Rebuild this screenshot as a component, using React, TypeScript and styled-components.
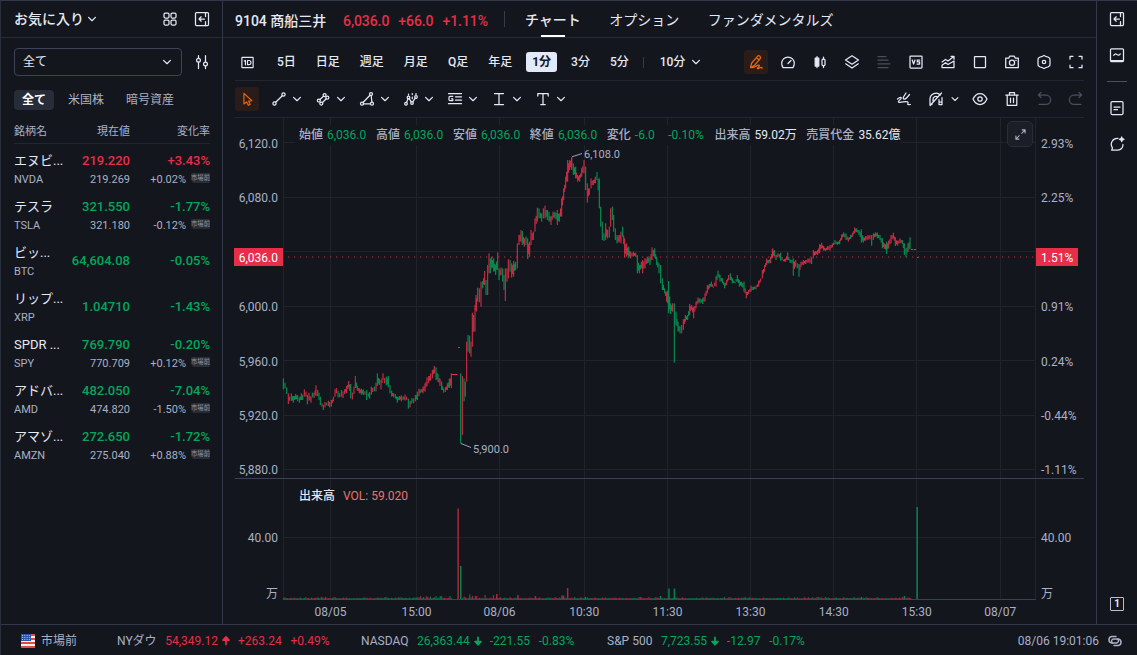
import React from "react";
import styled, { createGlobalStyle, css } from "styled-components";

const C = {
  bg: "#14161d",
  line: "#32384a",
  soft: "#212631",
  text: "#e4e9f6",
  mid: "#a9b1c6",
  dim: "#4a4e59",
  red: "#e62e48",
  green: "#05a55b",
  orange: "#e9650f",
};

const Global = createGlobalStyle`
  * { box-sizing: border-box; }
  body { margin: 0; background: ${C.bg}; overflow: hidden; }
  body, text { font-family: Roboto, "Noto Sans CJK JP", sans-serif; }
`;

const Page = styled.div`
  width: 1137px; height: 655px; display: flex; flex-direction: column;
  background: ${C.bg}; color: ${C.text}; font-size: 12px; line-height: 16px;
  border-top: 1px solid ${C.line}; border-left: 1px solid #292e3c; white-space: nowrap;
`;
const Body = styled.div`display: flex; height: 623px;`;

/* ---------- icons ---------- */
const Svg = styled.svg<{ $s: number }>`
  width: ${(p) => p.$s}px; height: ${(p) => p.$s}px; flex: none; display: block; overflow: visible;
  fill: none; stroke: currentColor; stroke-width: 1.25; stroke-linecap: round; stroke-linejoin: round;
`;
const shapes: Record<string, React.ReactNode> = {
  grid: <><rect x="2" y="2" width="5" height="5" rx="1.2" /><rect x="9" y="2" width="5" height="5" rx="1.2" /><rect x="2" y="9" width="5" height="5" rx="1.2" /><rect x="9" y="9" width="5" height="5" rx="1.2" /></>,
  collapse: <><rect x="1.5" y="1.5" width="13" height="13" rx="1" /><path d="M11.500 1.500v4M11.500 10.500v4M10.500 8H5M7.200 5.800 5 8 7.200 10.200" /></>,
  sliders: <><path d="M4.500 1.500V4.500M4.500 8V14.500M11.500 1.500v6.500M11.500 12v2.500" /><circle cx="4.500" cy="6.200" r="1.900" /><circle cx="11.500" cy="10" r="1.900" /></>,
  oneD: <><rect x="2" y="2.500" width="12" height="11" rx=".5" /><path d="M4.500 6.500 5.800 5.800V10.500M8 5.900h1.500q2.200 0 2.200 2.200t-2.200 2.200H8z" /></>,
  pencil: <path d="M2.500 13.500 3.700 9 9.500 2.300q1.200-1.100 2.400-.1t.4 2.300L6.700 11.200 2.500 13.500q2.500.6 5-1t3.500-1.300-.9 2.300 1.200.6 2.700.2M8.500 3.800l2.700 2.200" />,
  gauge: <path d="M3 13.500Q1.700 12 1.700 9.300a6.300 6.300 0 0 1 12.600 0q0 2.700-1.300 4.200zM8 9.500l3-3" />,
  candles: <><path d="M5 2.500v11M11.500 3v2M11.500 11.500v2" /><rect x="3.200" y="4" width="3.600" height="8" fill="currentColor" /><rect x="10" y="5" width="3" height="6.500" rx="1" /></>,
  layers: <path d="M8 1.800 14.500 6 8 10.200 1.500 6zM1.700 9.800 8 14l6.300-4.200" />,
  lines: <path d="M2 2.500h8M2 6.200h10M2 9.800h12M2 13.500h10" />,
  vs: <><rect x="2" y="2" width="12" height="12" rx=".8" /><path d="M4.200 6l1.400 4L7 6M11.700 6H9.300v1.900h2.300V10H9" /></>,
  area: <path d="M2 8 5.500 5.500 8 7l5.500-4.200M11 2.300h3v3M2 11.200 5.500 8.700 8 10.500 14 7v6.500H2z" />,
  square: <rect x="2.500" y="2.500" width="11" height="11" rx=".4" />,
  camera: <><path d="M1.700 4.200h3l1-2h4.600l1 2h3v9.500H1.700z" /><circle cx="8" cy="8.800" r="2.600" /><path d="M11.800 6.300h.4" /></>,
  hex: <><path d="M6.400 2.300 8 1.500l1.600.8L11.800 3l2 1.300.2 2.200v3l-.2 2.200-2 1.300-2.200.7-1.600.8-1.600-.8-2.200-.7-2-1.300L2 9.500v-3l.2-2.200 2-1.300z" /><circle cx="8" cy="8" r="1.700" /></>,
  full: <path d="M2 5V2.300h3M11 2.300h3V5M14 11v2.700h-3M5 13.700H2V11" />,
  cursor: <path d="M4.200 1.500v11.300l2.900-2.300 1.700 3.700 2-1-1.700-3.500 3.600-.4z" />,
  line: <><circle cx="3.500" cy="12.500" r="1.600" /><circle cx="12.500" cy="3.500" r="1.600" /><path d="M4.700 11.300l6.600-6.600" /></>,
  channel: <><circle cx="3.800" cy="9.600" r="1.500" /><circle cx="9.600" cy="4" r="1.500" /><circle cx="6.300" cy="12.600" r="1.500" /><circle cx="12.300" cy="6.700" r="1.500" /><path d="M5 8.500l3.500-3.300M7.500 11.500l3.700-3.700" /></>,
  triangle: <><circle cx="12" cy="3" r="1.500" /><circle cx="3" cy="12.700" r="1.500" /><circle cx="13" cy="12.700" r="1.500" /><path d="M4 11.500l7-7.300M12.200 4.500l.7 6.700M4.500 12.800h7" /></>,
  pattern: <><circle cx="3" cy="12.700" r="1.300" /><circle cx="5.500" cy="6.500" r="1.300" /><circle cx="9" cy="12" r="1.300" /><circle cx="13" cy="6" r="1.300" /><path d="M3.500 11.500 5 7.700M6.200 7.600 8.300 10.800M9.700 10.900l2.600-3.800M5.500 3v1M9.300 2.500v1M9.300 6v1.500M13 2.500v1" /></>,
  fib: <path d="M1.500 2.500h13M8.500 5.800h6M8.500 9.200h6M1.500 12.700h13M5.800 5.300H3q-1 0-1 1.200v2q0 1.200 1 1.200h2.800V7.800H4.500" />,
  ibeam: <path d="M3.500 2.500h9M3.500 13.500h9M8 2.500v11" />,
  text: <path d="M2.800 5V2.500h10.400V5M8 2.500v11M5.800 13.500h4.400" />,
  brush: <path d="M10 2 7.500 6q-.8 2 .7 2.200 1.300 0 2.800-1.700L13.500 3.500M1.500 8c3-2.500 5-1.800 2.800.4S1.500 11.300 4 11.300s7.500-1.600 8 0-2 2.400 2.300 2.200" />,
  magnet: <path d="M2 13.500V8a6 6 0 0 1 10.300-4M5 10V8.500a3 3 0 0 1 4.500-2.700M2 13.500h2M11 8.500v5h3V6.500M11 11h3M2 14.500 13.500 2" />,
  eye: <><path d="M1 8q2.500-5.500 7-5.500T15 8q-2.500 5.500-7 5.500T1 8z" /><circle cx="8" cy="8" r="2.200" /></>,
  trash: <path d="M1.800 4h12.400M5.500 4V1.700h5V4M3.200 4v10.300h9.600V4M6.500 7v4.500M9.500 7v4.500" />,
  undo: <path d="M2.500 4H10a4.500 4.500 0 0 1 0 9.300H3M5 1.500 2.300 4 5 6.500" />,
  redo: <path d="M13.500 4H6a4.500 4.500 0 0 0 0 9.300h7M11 1.500 13.700 4 11 6.500" />,
  wave: <><rect x="1.500" y="1.800" width="13" height="12.700" rx="1" /><path d="M2 13.700h12" /><path d="M4.700 8.300q1.600-2.200 3.300-.7t3.300-.7" /></>,
  note: <><rect x="2" y="1.500" width="12" height="13" rx="1.200" /><path d="M5 7h6M5 9.700h3.500" /></>,
  chat: <><path d="M9 2.300a6 6 0 0 0-5.500 9.500L2.700 14.200h6A6 6 0 0 0 14 8.500" /><path d="M12.700 1l.6 1.700 1.700.6-1.700.6-.6 1.700-.6-1.700-1.700-.6 1.700-.6z" fill="currentColor" /></>,
  expand: <path d="M9.500 6.500 13.500 2.500M10 2.300h3.700V6M6.500 9.500 2.500 13.500M2.300 10v3.700H6" />,
  chev: <path d="M4.600 6.400 8 9.700l3.400-3.300" />,
  link: <g strokeWidth="1.500"><path d="M9 3.500H4.700A3.300 3.300 0 0 0 4.700 10H9.500a2.200 2.200 0 0 0 1-4" /><path d="M7 12.500h4.300A3.300 3.300 0 0 0 11.300 6H6.500a2.200 2.200 0 0 0-1 4" /></g>,
  up: <path d="M8 3v9.500M8 2.500 4 6.800h8z" fill="currentColor" strokeWidth="2.300" />,
  down: <path d="M8 3v9.500M8 13 4 8.700h8z" fill="currentColor" strokeWidth="2.300" />,
};
const Icon = ({ n, s = 16 }: { n: string; s?: number }) => (
  <Svg viewBox="0 0 16 16" $s={s}>{shapes[n]}</Svg>
);

/* ---------- watch list ---------- */
const Side = styled.aside`width: 222px; border-right: 1px solid ${C.line}; flex: none;`;
const SideHead = styled.div`
  height: 37px; display: flex; align-items: center; padding: 0 12px 0 13px; border-bottom: 1px solid #262b38;
  font-size: 14px; font-weight: 500;
`;
const Fill = styled.div`flex: 1;`;
const Gap = styled.div<{ $w: number }>`width: ${(p) => p.$w}px; flex: none;`;
const Filter = styled.div`display: flex; align-items: center; padding: 10px 12px 0 13px; gap: 12px;`;
const Select = styled.div`
  width: 168px; height: 28px; border: 1px solid #3b4259; border-radius: 4px; padding: 0 6px 0 8px;
  display: flex; align-items: center; justify-content: space-between;
`;
const Chips = styled.div`display: flex; margin: 14px 0 0 13px; gap: 6px; color: ${C.mid};`;
const Chip = styled.div<{ $on?: boolean }>`
  height: 20px; line-height: 21px; padding: 0 8px; border-radius: 4px;
  ${(p) => p.$on && css`background: #272c38; color: #fff; font-weight: 700;`}
`;
const Cols = styled.div`
  display: grid; grid-template-columns: 47px 69px 80px; margin: 11px 12px 0 13px; height: 23px; line-height: 22px;
  border-bottom: 1px solid ${C.soft}; font-size: 11px; color: ${C.mid};
`;
const Right = styled.span`text-align: right;`;
const Row = styled.div`
  display: grid; grid-template-columns: 49px 67px 80px; height: 46px; margin: 0 12px 0 13px; padding-top: 6px; align-items: center;
`;
const Stack = styled.div<{ $end?: boolean; $single?: boolean }>`
  display: flex; flex-direction: column; height: 40px; padding-bottom: ${(p) => (p.$single ? 3 : 1)}px; justify-content: center;
  align-items: ${(p) => (p.$end ? "flex-end" : "flex-start")};
`;
const Name = styled.div`font-size: 13px; line-height: 20px;`;
const Sub = styled.div`
  font-size: 11px; line-height: 18px; height: 18px; color: ${C.mid}; display: flex; gap: 5px;
`;
const Value = styled.div<{ $up?: boolean }>`
  font-size: 13px; line-height: 20px; font-weight: 500; color: ${(p) => (p.$up ? C.red : C.green)};
`;
const Tag = styled.span`
  width: 19px; height: 10px; line-height: 10px; margin-top: 2px; font-size: 6.3px; text-align: center;
  background: #292c36; color: #9297a4; border-radius: 1px 1px 1px 4px;
`;
const stocks: [string, string, string, string, string?, string?][] = [
  ["エヌビ...", "NVDA", "219.220", "+3.43%", "219.269", "+0.02%"],
  ["テスラ", "TSLA", "321.550", "-1.77%", "321.180", "-0.12%"],
  ["ビッ...", "BTC", "64,604.08", "-0.05%"],
  ["リップ...", "XRP", "1.04710", "-1.43%"],
  ["SPDR ...", "SPY", "769.790", "-0.20%", "770.709", "+0.12%"],
  ["アドバ...", "AMD", "482.050", "-7.04%", "474.820", "-1.50%"],
  ["アマゾ...", "AMZN", "272.650", "-1.72%", "275.040", "+0.88%"],
];

const WatchList = () => (
  <Side>
    <SideHead>お気に入り<Icon n="chev" /><Fill /><Icon n="grid" /><Gap $w={16} /><Icon n="collapse" /></SideHead>
    <Filter><Select>全て<Icon n="chev" /></Select><Icon n="sliders" /></Filter>
    <Chips><Chip $on>全て</Chip><Chip>米国株</Chip><Chip>暗号資産</Chip></Chips>
    <Cols><span>銘柄名</span><Right>現在値</Right><Right>変化率</Right></Cols>
    {stocks.map(([name, code, price, chg, p2, c2]) => (
      <Row key={code}>
        <Stack><Name>{name}</Name><Sub>{code}</Sub></Stack>
        <Stack $end $single={!p2}><Value $up={chg[0] === "+"}>{price}</Value>{p2 && <Sub>{p2}</Sub>}</Stack>
        <Stack $end $single={!p2}><Value $up={chg[0] === "+"}>{chg}</Value>{c2 && <Sub>{c2}<Tag>市場前</Tag></Sub>}</Stack>
      </Row>
    ))}
  </Side>
);

/* ---------- main column ---------- */
const Main = styled.main`width: 873px; flex: none;`;
const Head = styled.div`
  height: 37px; display: flex; align-items: center; padding-left: 12px; border-bottom: 1px solid #262b38; font-size: 14px;
`;
const Title = styled.div`font-weight: 500; padding-top: 3px; width: 91px;`;
const Quote = styled.div`display: flex; gap: 9px; color: ${C.red}; margin-left: 17px; padding-top: 3px; font-weight: 500; letter-spacing: -.07px;`;
const Rule = styled.div<{ $h: number; $l: number; $r: number }>`
  width: 1px; height: ${(p) => p.$h}px; background: #343a48; margin: 0 ${(p) => p.$r}px 0 ${(p) => p.$l}px;
`;
const Tab = styled.div<{ $on?: boolean }>`
  height: 36px; line-height: 38px; margin-right: 28.5px; display: flex; flex-direction: column; align-items: center;
  ${(p) => p.$on && css`font-weight: 500; &::after { content: ""; width: 24px; height: 2px; flex: none; margin-top: -4px; background: #fff; }`}
`;
const Bar = styled.div<{ $h: number; $top?: number }>`
  height: ${(p) => p.$h}px; margin: 0 12px; padding-top: ${(p) => p.$top || 0}px;
  display: flex; align-items: center; border-bottom: 1px solid ${C.soft};
`;
const Period = styled.div<{ $on?: boolean; $last?: boolean }>`
  height: 20px; line-height: 21px; padding: 0 6px; margin-right: ${(p) => (p.$last ? -3 : 8)}px; border-radius: 3px; font-weight: 500;
  ${(p) => p.$on && css`background: #e2e9fb; color: #14161d; font-weight: 700;`}
`;
const Tool = styled.div<{ $on?: boolean; $dim?: boolean }>`
  width: 24px; height: 24px; display: flex; align-items: center; justify-content: center; border-radius: 3px; flex: none;
  color: ${(p) => (p.$on ? C.orange : p.$dim ? C.dim : C.text)}; background: ${(p) => (p.$on ? "#2a1d19" : "none")};
`;
const Tools = styled.div`display: flex; gap: 8px; margin: 0 -4px 0 auto;`;
const Draw = styled.div`display: flex; align-items: center; width: 37px; margin-left: 7px; gap: 2px;`;
const Snap = styled.div`display: flex; align-items: center; width: 36px;`;

/* ---------- chart ---------- */
const ChartBox = styled.div`position: relative; height: 506px;`;
const Plot = styled.svg`display: block; width: 873px; height: 506px;`;
const Info = styled.div`
  position: absolute; left: 72px; top: 7px; width: 605px; height: 20px; padding-left: 4px;
  display: flex; gap: 9.7px; line-height: 20px; background: ${C.bg};
`;
const Pair = styled.span<{ $c?: string }>`
  color: ${C.mid}; font-weight: 500; b { font-weight: 400; margin-left: 4px; color: ${(p) => p.$c || C.green}; }
  b + b { margin-left: 13.5px; margin-right: 1px; }
`;
const Zoomer = styled.div`
  position: absolute; left: 784px; top: 3px; width: 26px; height: 26px; border-radius: 5px; border: 1px solid #282d39;
  background: #1b1e27; display: flex; align-items: center; justify-content: center; color: ${C.mid};
`;

type Session = { x: number; y: number; c: string };
/* Each entry is "x top bottom" in third-pixel units; the trailing letter is the candle's colour. */
const sessions: Session[] = [
  { x: 225, y: 300, c: "175 235 268g,180 248 265g,185 262 282g,190 280 312r,194 290 302g,199 280 303r,205 288 308g,212 282 298r,218 285 304g,223 292 308g,229 280 300r,233 284 300g,238 268 290r,243 275 290r,247 285 313g,252 278 302r,258 290 308r,262 278 292g,267 278 294r,273 256 288r,278 270 288g,282 278 300g,286 290 315g,291 310 320r,295 315 330g,300 306 322r,305 308 316g,310 302 318r,314 306 322g,319 300 320r,325 290 304r,330 268 290r,334 264 280r,339 272 292g,344 280 292r,349 270 290g,354 274 294r,359 268 282r,365 258 280r,371 243 262r,377 252 295g,382 278 298r,387 260 282r,391 228 264r,397 258 272g,403 265 280r,409 266 284g,415 268 285g,420 274 284r,425 270 300g,430 280 290g,434 276 296g,439 260 284r,443 264 276r,448 260 274g,453 248 274r,457 220 258g,463 236 255g,468 240 268r,474 220 240r,479 234 250r,484 230 256g,490 228 262g,495 255 280g,500 272 290g,506 280 292r,511 282 295g,517 290 308g,523 288 300g,529 286 304r,534 290 300g,540 284 302r,545 290 300r,550 296 326g,555 304 322r,561 294 308g,566 296 310r,571 285 304r,577 275 300g,582 266 288r,588 268 278g,594 260 280r,600 250 275r,606 232 258r,611 228 250r,617 220 242r,622 210 235r,628 198 220r,633 202 240g,639 222 246g,645 236 258r,650 244 270g,656 266 278g,661 262 276r,667 250 270r,673 236 264g,679 220 264r" },
  { x: 225, y: 300, c: "707 220 431g,712 228 405r,717 235 304g,721 245 290r,725 125 245r,729 105 155g,734 107 160g,738 125 170r,742 38 140r,746 45 95g,750 15 95r,754 -5 35r" },
  { x: 225, y: 115, c: "753 540 585r,758 518 560r,763 520 562g,768 500 575r,773 498 520g,779 468 510r,783 495 540g,788 450 540r,792 415 475r,796 430 475g,800 425 460r,806 430 470g,812 450 480g,818 412 465r,822 460 495g,828 458 480r,833 460 500g,837 480 525g,841 460 558r,846 460 500r,850 433 490r,855 435 470g,860 445 488r,866 438 485r,872 440 465g,877 385 460r,882 360 390r,888 345 380r,892 348 390g,898 370 395r,903 365 390g,908 370 432g,914 380 425r,918 345 390r,925 350 375r,930 310 350r,937 278 320r,942 280 310g,950 295 320g,955 280 310r,960 272 310r,967 285 315g,972 290 320g,978 305 330r,984 290 310r,990 290 310g,997 285 330r,1003 295 320g,1010 250 305r,1016 220 255r,1022 185 220r,1028 135 200r,1034 135 165r,1040 128 160r" },
  { x: 540, y: 140, c: "95 52 90r,100 70 105g,107 80 115g,113 105 125r,119 105 125g,125 85 110r,132 60 100r,137 80 150g,142 130 188r,148 145 165r,153 115 145r,160 120 135r,166 110 130r,171 96 120g,178 115 205g,182 200 260g,187 245 300g,192 280 303g,197 250 300r,203 270 295g,208 260 292r,212 205 260r,217 200 240g,221 225 275g,226 265 300g,231 285 310g,237 285 308r,243 275 310r,248 260 290g,254 295 352r,260 310 350r,266 320 355g,272 335 355r,280 335 350r,287 338 350g,292 345 400g,298 375 400g,304 365 385g,308 360 400r,315 355 385r,322 350 370r,330 350 375g,336 322 360r,344 325 350g,350 350 375g,357 370 400g,362 375 430g,367 415 450g,374 445 460g,380 455 485r,386 423 520g,392 490 522g,398 490 515r,403 490 668g,408 515 555g,414 545 575g,420 560 580g,425 555 580r,430 538 570r,436 525 545r,443 525 540g,449 492 525r,455 495 510r,461 500 535r,468 485 505r,474 472 490r,480 475 490g,488 475 492g,495 460 485r,502 435 460r,508 432 445g,514 425 440g,520 439 443r,528 410 440r,534 392 410g,540 405 425g,548 415 430g,554 430 445g,560 420 435r,566 405 420r,571 400 420g,577 415 430g,585 425 430g,592 405 425g,598 420 440g,605 425 440r,612 425 455g,619 455 475r,626 450 462r,633 437 455r,640 440 450g,648 437 448r,656 422 440r,662 415 425r,667 390 415r,674 375 395r,680 355 375r,686 360 370g,692 350 370r,698 325 350r" },
  { x: 740, y: 200, c: "97 147 175r,103 150 168g,108 164 180g,114 160 170r,122 158 182g,130 179 184r,137 175 185r,143 157 180g,150 178 188g,156 180 190g,160 175 227g,167 180 200r,172 190 205g,177 192 230g,183 185 200r,190 180 195r,197 180 192r,204 175 188r,210 175 190r,215 172 192g,220 150 175r,227 153 165r,233 150 165r,239 132 160r,245 128 145r,251 138 152g,257 145 153r,263 138 150r,270 135 152r,277 130 142r,285 120 133g,292 125 135r,299 120 133g,305 103 120r,311 97 110g,318 100 120g,325 113 125r,332 105 117g,338 98 110r,344 82 100r,350 85 96g,357 90 105g,364 88 128g,370 112 128g,377 108 122r,384 105 120r,390 105 118r,395 105 137g,400 100 120r,406 97 110g,412 97 115g,420 105 120g,427 115 145g,433 130 146r,440 125 162g,446 122 145r,453 105 130r,460 98 115r,466 112 138g,473 122 137r,480 115 130r,487 120 132g,493 130 165g,498 145 172g,504 130 155r,510 112 148g" },
];
type Bar3 = { x: number; t: number; b: number; up: boolean };
const candles: Bar3[] = sessions.flatMap((s) => {
  const pts = s.c.split(",").map((e) => {
    const [x, t, b] = e.slice(0, -1).split(" ").map(Number);
    return { x: s.x + x / 3, t: s.y + t / 3, b: s.y + b / 3, up: e.endsWith("r") };
  });
  return pts.flatMap((p, i) => {
    const q = pts[i + 1];
    if (!q || q.x - p.x < 1.9) return [p];
    const t = (p.t + q.t) / 2, b = (p.b + q.b) / 2, m = (t + b) / 2, h = Math.max(1.2, (b - t) * 0.3);
    return [p, { x: (p.x + q.x) / 2, t: m - h, b: m + h, up: i % 3 ? q.up : p.up }];
  });
});

const vol: Bar3[] = [];
for (let i = 0; i < 450; i++) {
  const x = 283.5 + i * 1.4;
  if ((x > 452 && x < 462) || x > 911) continue;
  const r = Math.abs(Math.sin(i * 12.9898) * 43758.5453) % 1;
  const q = Math.abs(Math.sin(i * 78.233) * 12543.123) % 1;
  const busy = x > 462 && x < 495 ? 2.6 : x > 420 && x < 452 ? 1.5 : 0.8;
  vol.push({ x, t: 598.2 - r * r * r * busy * 1.6, b: 599, up: q > (x > 360 && x < 420 ? 0.7 : 0.5) });
}
const spikes: Bar3[] = [
  [458.2, 508.5, 1], [460.8, 566, 0], [496.8, 594, 1], [518, 595, 1], [535.5, 596, 1], [562, 595.5, 1], [563.5, 595.5, 1], [567.7, 588, 1], [585.5, 597, 0], [660.5, 596, 0], [669, 588.5, 0], [674.5, 588.5, 0], [861.5, 597, 0], [904.5, 596, 0], [917.2, 507, 0],
].map(([x, t, u]) => ({ x, t, b: 599, up: !!u }));

const vLines: [number, string][] = [[330.5, "08/05"], [416.5, "15:00"], [499.5, "08/06"], [584.3, "10:30"], [667.5, "11:30"], [750.5, "13:30"], [833.7, "14:30"], [916.8, "15:30"], [1000.2, "08/07"]];
const hLines: [number, string, string][] = [[142.7, "6,120.0", "2.93%"], [197.2, "6,080.0", "2.25%"], [251.5, "", ""], [306.2, "6,000.0", "0.91%"], [360.7, "5,960.0", "0.24%"], [415, "5,920.0", "-0.44%"], [469.3, "5,880.0", "-1.11%"], [537, "40.00", "40.00"]];

const Chart = () => (
  <ChartBox>
    <Plot viewBox="223 118 873 506" fontSize="12" fill={C.mid}>
      <g stroke="#1f232c" strokeWidth="1">
        {[283.5, 1035.5].map((x) => <path key={x} d={`M${x} 118V599`} />)}
        {vLines.map(([x]) => <path key={x} d={`M${Math.floor(x) + 0.5} 118V599`} />)}
        {hLines.map(([y]) => <path key={y} d={`M283 ${Math.floor(y) + 0.5}H1036`} />)}
      </g>
      <path d="M235 478.5H1084" stroke="#3a4156" />
      <path d="M283 599.5H1036" stroke="#3b4150" />
      <path d="M288 257H1036" stroke="#c62c43" strokeWidth="1.2" strokeDasharray="1.2 4.8" />
      {candles.map((c, i) => (
        <rect key={i} x={c.x - 0.55} y={c.t} width="1.1" height={Math.max(1, c.b - c.t)} fill={c.up ? "#d52d45" : "#049452"} />
      ))}
      {vol.map((c, i) => (
        <rect key={i} x={c.x - 0.6} y={c.t} width="1.2" height={c.b - c.t + 0.5} fill={c.up ? "#9d293a" : "#0a7445"} />
      ))}
      {spikes.map((c, i) => (
        <rect key={i} x={c.x - 0.8} y={c.t} width="1.5" height={c.b - c.t} fill={c.up ? "#a92a3c" : "#08824b"} />
      ))}
      <path d="M451.5 374.5h6M458 347.5h2" stroke={C.red} />
      <path d="M911 249.5h6" stroke={C.green} strokeDasharray="2 1" />
      <path d="M917 257.5h1.5" stroke={C.green} />
      <path d="M572 156.8 582 153.5M461 443.5 471 447.5" stroke="#9aa1b4" fill="none" />
      <text x="584" y="158" fontSize="11">6,108.0</text>
      <text x="473" y="453" fontSize="11">5,900.0</text>
      {hLines.map(([y, l, r]) => (
        <g key={y}>
          <text x="278" y={Math.round(y + 5)} textAnchor="end">{l}</text>
          <text x="1041" y={Math.round(y + 5)}>{r}</text>
        </g>
      ))}
      <text x="278" y="597.5" textAnchor="end">万</text>
      <text x="1041" y="597.5">万</text>
      {vLines.map(([x, l]) => <text key={l} x={x} y="616" textAnchor="middle">{l}</text>)}
      <rect x="234" y="248" width="49" height="18" fill={C.red} />
      <rect x="1036" y="248" width="42" height="18" fill={C.red} />
      <text x="278" y="262" textAnchor="end" fill="#fff">6,036.0</text>
      <text x="1041" y="262" fill="#fff">1.51%</text>
      <text x="299" y="500" fill={C.text} fontWeight="500">出来高</text>
      <text x="343" y="500" fill="#f0716c">VOL: 59.020</text>
    </Plot>
    <Info>
      <Pair>始値<b>6,036.0</b></Pair><Pair>高値<b>6,036.0</b></Pair><Pair>安値<b>6,036.0</b></Pair><Pair>終値<b>6,036.0</b></Pair>
      <Pair>変化<b>-6.0</b><b>-0.10%</b></Pair>
      <Pair $c={C.text}>出来高<b>59.02万</b></Pair><Pair $c={C.text}>売買代金<b>35.62億</b></Pair>
    </Info>
    <Zoomer><Icon n="expand" s={13} /></Zoomer>
  </ChartBox>
);

/* ---------- right rail and status bar ---------- */
const Rail = styled.aside`
  width: 41px; border-left: 1px solid ${C.line}; display: flex; flex-direction: column; align-items: center; padding: 10px 0 13px; color: ${C.text};
`;
const RailGap = styled.div<{ $h: number }>`height: ${(p) => p.$h}px;`;
const RailRule = styled.div`width: 20px; height: 1px; background: #4a5062;`;
const PageNo = styled.div`
  width: 14px; height: 14px; border: 1.5px solid #b9bfce; border-radius: 1px; font-size: 10px; line-height: 12px; font-weight: 700; text-align: center;
`;
const Status = styled.footer`
  height: 31px; border-top: 1px solid ${C.line}; display: flex; align-items: center; padding: 1px 14px 0 20px; color: ${C.mid};
`;
const Index = styled.div<{ $w: number }>`display: flex; width: ${(p) => p.$w}px; align-items: center;`;
const Move = styled.div<{ $up?: boolean }>`
  display: flex; align-items: center; margin-left: 8.6px; color: ${(p) => (p.$up ? C.red : C.green)};
  svg { margin: 0 6px 0 2px; } span { margin-right: 8.8px; }
`;
const indices: [string, string, string, string, number][] = [
  ["NYダウ", "54,349.12", "+263.24", "+0.49%", 244],
  ["NASDAQ", "26,363.44", "-221.55", "-0.83%", 246],
  ["S&P 500", "7,723.55", "-12.97", "-0.17%", 200],
];
const Flag = () => (
  <svg width="14" height="14" viewBox="0 0 14 14">
    <rect width="14" height="14" rx="1" fill="#f4eeee" />
    {[0, 1, 2, 3].map((i) => <rect key={i} y={i * 4} width="14" height="2" fill="#e04a43" />)}
    <rect width="10" height="7" fill="#2f55a8" />
    {[1, 3, 5].map((y) => [1, 3.3, 5.6, 7.9].map((x) => <rect key={`${x}${y}`} x={x} y={y} width=".9" height=".9" fill="#c4d0ee" />))}
  </svg>
);

const periods = ["5日", "日足", "週足", "月足", "Q足", "年足", "1分", "3分", "5分"];
const drawTools = ["line", "channel", "triangle", "pattern", "fib", "ibeam", "text"];
const viewTools = ["pencil", "gauge", "candles", "layers", "lines", "vs", "area", "square", "camera", "hex", "full"];

export default function App() {
  return (
    <Page>
      <Global />
      <Body>
        <WatchList />
        <Main>
          <Head>
            <Title>9104 商船三井</Title>
            <Quote><span>6,036.0</span><span>+66.0</span><span>+1.11%</span></Quote>
            <Rule $h={16} $l={16} $r={20} />
            <Tab $on>チャート</Tab><Tab>オプション</Tab><Tab>ファンダメンタルズ</Tab>
          </Head>
          <Bar $h={43} $top={6}>
            <Tool><Icon n="oneD" s={15} /></Tool><Gap $w={12} />
            {periods.map((p) => <Period key={p} $on={p === "1分"}>{p}</Period>)}
            <Rule $h={11} $l={0} $r={10} />
            <Period $last>10分</Period><Icon n="chev" />
            <Tools>{viewTools.map((t) => <Tool key={t} $on={t === "pencil"} $dim={t === "lines"}><Icon n={t} /></Tool>)}</Tools>
          </Bar>
          <Bar $h={37}>
            <Tool $on><Icon n="cursor" s={15} /></Tool><Gap $w={5} />
            {drawTools.map((t) => <Draw key={t}><Icon n={t} /><Icon n="chev" /></Draw>)}
            <Tools>
              <Tool><Icon n="brush" /></Tool>
              <Snap><Tool><Icon n="magnet" /></Tool><Icon n="chev" s={14} /></Snap>
              <Tool><Icon n="eye" /></Tool><Tool><Icon n="trash" /></Tool>
              <Tool $dim><Icon n="undo" /></Tool><Tool $dim><Icon n="redo" /></Tool>
            </Tools>
          </Bar>
          <Chart />
        </Main>
        <Rail>
          <Icon n="collapse" /><RailGap $h={20} /><Icon n="wave" /><RailGap $h={18} /><RailRule /><RailGap $h={18} />
          <Icon n="note" /><RailGap $h={20} /><Icon n="chat" /><Fill /><PageNo>1</PageNo>
        </Rail>
      </Body>
      <Status>
        <Flag /><Gap $w={6} />市場前<Gap $w={40} />
        {indices.map(([n, v, d, p, w]) => (
          <Index key={n} $w={w}>{n}
            <Move $up={d[0] === "+"}>{v}<Icon n={d[0] === "+" ? "up" : "down"} s={12} /><span>{d}</span>{p}</Move>
          </Index>
        ))}
        <Fill />08/06 19:01:06<Gap $w={8} /><Icon n="link" />
      </Status>
    </Page>
  );
}
